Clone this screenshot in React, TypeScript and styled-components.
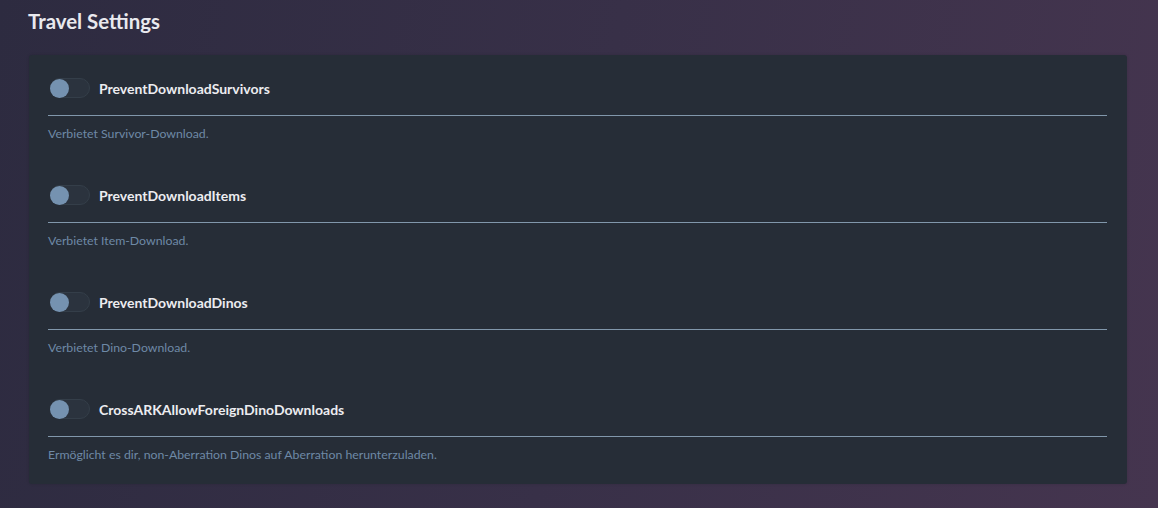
import styled, { createGlobalStyle } from "styled-components";

type Setting = {
    key: string;
    description: string;
    enabled: boolean;
};

const settings: Setting[] = [
    { key: "PreventDownloadSurvivors", description: "Verbietet Survivor-Download.", enabled: false },
    { key: "PreventDownloadItems", description: "Verbietet Item-Download.", enabled: false },
    { key: "PreventDownloadDinos", description: "Verbietet Dino-Download.", enabled: false },
    {
        key: "CrossARKAllowForeignDinoDownloads",
        description: "Ermöglicht es dir, non-Aberration Dinos auf Aberration herunterzuladen.",
        enabled: false,
    },
];

const GlobalStyle = createGlobalStyle`
    html, body {
        margin: 0;
        padding: 0;
        height: 100%;
    }
    body {
        background: linear-gradient(100deg, #2d2b40 0%, #383048 50%, #45354f 100%);
        font-family: "Lato", "Noto Sans", sans-serif;
    }
`;

const Page = styled.div`
    padding: 9px 31px 24px 28px;
    box-sizing: border-box;
    min-height: 508px;
`;

const Heading = styled.h2`
    margin: 0 0 22px;
    font-size: 20.4px;
    font-weight: 700;
    line-height: 24px;
    color: #e9e9ee;
`;

const Card = styled.div`
    margin-left: 1px;
    background: #262d37;
    border-radius: 3px;
    padding: 23px 20px 21px 20px;
    display: flex;
    flex-direction: column;
    gap: 43px;
    box-shadow: 0 0 3px rgba(0, 0, 0, 0.15);
`;

const Item = styled.div`
    display: flex;
    flex-direction: column;
`;

const Head = styled.label`
    display: flex;
    align-items: center;
    gap: 10px;
    height: 20px;
    cursor: pointer;
`;

const Track = styled.span<{ $on: boolean }>`
    position: relative;
    width: 40px;
    height: 20px;
    margin-left: 1px;
    box-sizing: border-box;
    border-radius: 10px;
    border: 1px solid #343e49;
    background: ${p => (p.$on ? "#4f7396" : "#2b333e")};
    flex-shrink: 0;
`;

const Knob = styled.span<{ $on: boolean }>`
    position: absolute;
    top: 0px;
    left: ${p => (p.$on ? "20px" : "-1px")};
    width: 19px;
    height: 19px;
    border-radius: 50%;
    background: #7592b0;
`;

const Name = styled.span`
    margin-left: -1px;
    font-size: 14px;
    font-weight: 700;
    color: #ececf0;
`;

const Rule = styled.hr`
    border: 0;
    height: 1px;
    background: #8197ab;
    margin: 17px 0 0 -1px;
`;

const Desc = styled.p`
    margin: 10px 0 0 -1px;
    font-size: 12.3px;
    line-height: 16px;
    color: #6e89a6;
`;

function App() {
    return (
        <Page>
            <GlobalStyle />
            <Heading>Travel Settings</Heading>
            <Card>
                {settings.map(s => (
                    <Item key={s.key}>
                        <Head>
                            <Track $on={s.enabled}>
                                <Knob $on={s.enabled} />
                            </Track>
                            <Name>{s.key}</Name>
                        </Head>
                        <Rule />
                        <Desc>{s.description}</Desc>
                    </Item>
                ))}
            </Card>
        </Page>
    );
}

export default App;
